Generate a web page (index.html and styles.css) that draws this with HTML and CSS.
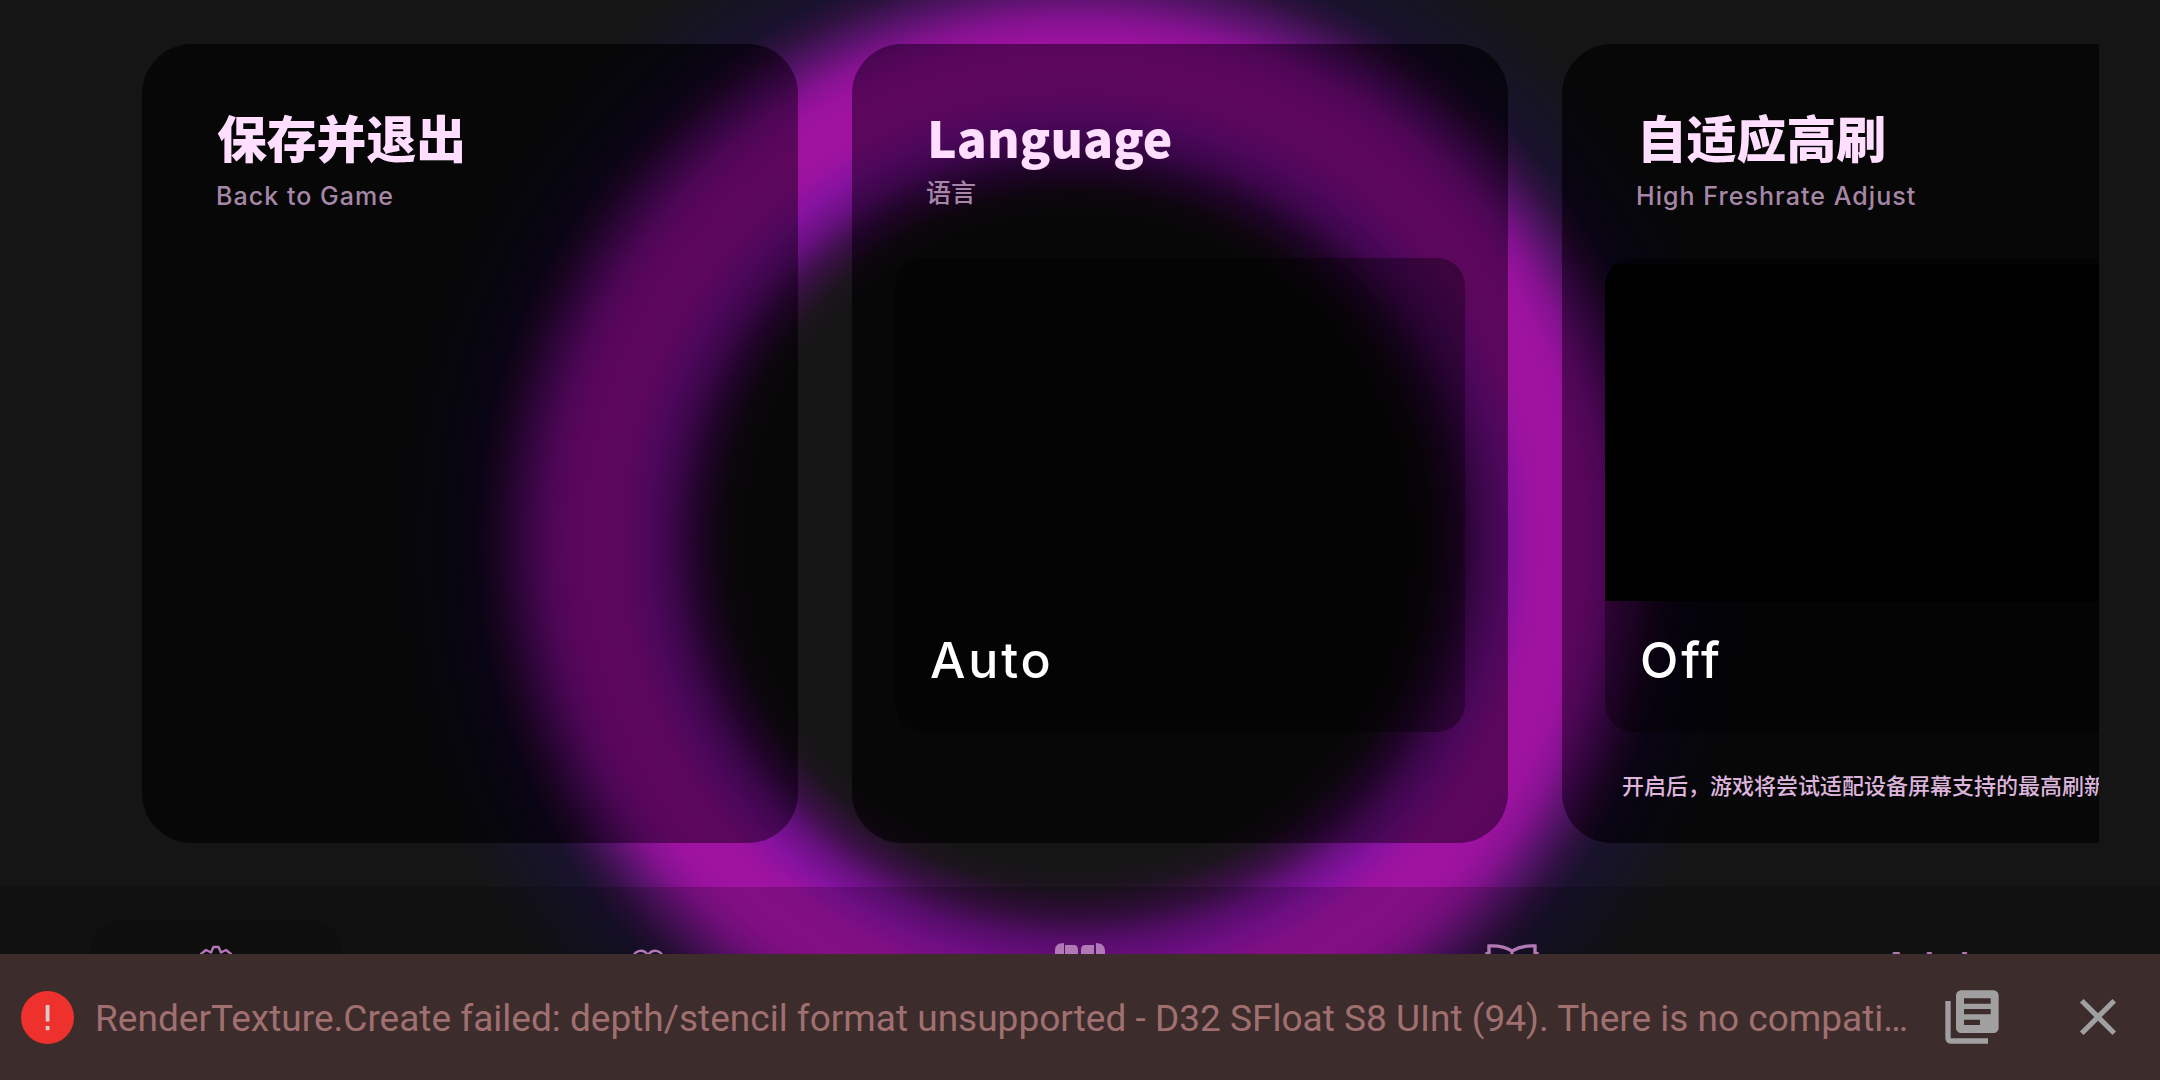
FILE: index.html
```html
<!DOCTYPE html>
<html lang="zh-CN">
<head>
    <meta charset="UTF-8">
    <meta name="viewport" content="width=device-width, initial-scale=1.0">
    <title>Settings</title>
    <link rel="stylesheet" href="styles.css">
</head>
<body>

    <main class="cards">
        <section class="card">
            <h2>保存并退出</h2>
            <p class="subtitle">Back to Game</p>
        </section>

        <section class="card">
            <h2>Language</h2>
            <p class="subtitle cjk">语言</p>
            <div class="option">
                <span class="value">Auto</span>
            </div>
        </section>

        <section class="card">
            <h2>自适应高刷</h2>
            <p class="subtitle">High Freshrate Adjust</p>
            <div class="option">
                <div class="preview"></div>
                <span class="value">Off</span>
            </div>
            <p class="hint">开启后，游戏将尝试适配设备屏幕支持的最高刷新率</p>
        </section>
    </main>

    <!-- Bottom navigation -->
    <nav class="tabs">
        <div class="tab active">
            <svg width="60" height="60" viewBox="0 0 60 60" fill="none" stroke="currentColor" stroke-width="2.4" stroke-linejoin="round">
                <path d="M15 17l5-4 5 2.500 2.500-5.500h5l2.500 5.500 5-2.500 5 4-2 5 4 4v8l-4 3 2 6-5 4-5-2-3 5h-4l-3-5-5 2-5-4 2-6-4-3v-8l4-4z"/>
                <circle cx="30" cy="31" r="7"/>
            </svg>
        </div>
        <div class="tab">
            <svg width="60" height="60" viewBox="0 0 60 60" fill="none" stroke="currentColor" stroke-width="2.4">
                <path d="M30 47C21 38 15 31 15 23c0-10 10-12 15-5 5-7 15-5 15 5 0 8-6 15-15 24z"/>
            </svg>
        </div>
        <div class="tab">
            <svg width="60" height="60" viewBox="0 0 60 60" fill="currentColor">
                <path d="M5 50V13q0-7 9-7v44z"/>
                <path d="M15 50V8h9q4 0 4 5v37z"/>
                <path d="M31 50V13q0-5 4-5h9v42z"/>
                <path d="M46 50V6q8 0 9 7v37z"/>
            </svg>
        </div>
        <div class="tab">
            <svg width="60" height="60" viewBox="0 0 60 60" fill="none" stroke="currentColor" stroke-width="3.4">
                <path d="M30 14Q20 8 7 9V44q13-2 23 5 10-7 23-5V9Q40 8 30 14zV48M5 15v32M55 15v32"/>
            </svg>
        </div>
        <div class="tab">
            <span class="tab-text">Adult</span>
        </div>
    </nav>

    <!-- Error toast -->
    <footer class="toast">
        <span class="badge">
            <svg width="53" height="53" viewBox="0 0 53 53">
                <circle cx="26.5" cy="26.5" r="26.5" fill="#ef312d"/>
                <path d="M24.700 14h3.800v16.500h-3.800zM24.700 35h3.800v4.200h-3.800z" fill="#d6cccc"/>
            </svg>
        </span>
        <p class="message">RenderTexture.Create failed: depth/stencil format unsupported - D32 SFloat S8 UInt (94). There is no compatible format</p>
        <svg class="copy" width="64" height="64" viewBox="0 0 24 24" fill="currentColor">
            <path d="M4 6H2v14c0 1.100.9 2 2 2h14v-2H4z"/>
            <path fill-rule="evenodd" d="M20 2H8c-1.100 0-2 .9-2 2v12c0 1.100.9 2 2 2h12c1.100 0 2-.9 2-2V4c0-1.100-.9-2-2-2zM19 7H9V5h10zM19 11H9V9h10zM15 15H9v-2h6z"/>
        </svg>
        <svg class="close" width="62" height="62" viewBox="0 0 24 24" fill="currentColor">
            <path d="M19 6.410 17.590 5 12 10.590 6.410 5 5 6.410 10.590 12 5 17.590 6.410 19 12 13.410 17.590 19 19 17.590 13.410 12z"/>
        </svg>
    </footer>

</body>
</html>
```
FILE: styles.css
```css
* {
    box-sizing: border-box;
}

body {
    margin: 0;
    width: 2160px;
    height: 1080px;
    overflow: hidden;
    display: flex;
    flex-direction: column;
    font-family: "Noto Sans CJK SC", sans-serif;
    background: #151515 radial-gradient(1000px 985px at 1077px 541px,
        #151515 330px, #1d141f 352px, #3c1048 380px, #681080 405px, #85129f 430px,
        #9c13a0 456px, #a013a0 485px, #9a129e 508px, #84128f 530px, #56136a 556px,
        #2f1140 582px, #19122d 604px, #161424 635px, #151515 690px) fixed;
}

/* Cards */
.cards {
    width: 2099px;
    height: 887px;
    padding: 44px 0 44px 142px;
    display: flex;
    gap: 54px;
    overflow: hidden;
    flex-shrink: 0;
}

.card {
    width: 656px;
    height: 799px;
    flex-shrink: 0;
    padding: 54px 43px 0;
    border-radius: 50px;
    /* same glow as the body, seen through the dark card */
    background: #070707 radial-gradient(1000px 985px at 1077px 541px,
        #070707 330px, #0c060d 352px, #200429 380px, #3b0649 405px, #4d075b 430px,
        #5a075c 456px, #5c075c 485px, #58065b 508px, #4b0653 530px, #30053c 556px,
        #18041f 582px, #090413 604px, #07060e 635px, #070707 690px) fixed;
}

.card h2 {
    margin: 0 0 0 32px;
    height: 79px;
    font-size: 49.8px;
    line-height: 77px;
    font-weight: 900;
    color: #ffdeff;
}

.subtitle {
    margin: 0 0 0 31px;
    height: 36px;
    font-family: Inter, sans-serif;
    font-size: 25px;
    line-height: 38px;
    letter-spacing: 1.05px;
    font-weight: 500;
    color: #a787a8;
}

.subtitle.cjk {
    font-family: "Noto Sans CJK SC", sans-serif;
    letter-spacing: 0;
    line-height: 28px;
}

.option {
    height: 474px;
    margin-top: 45px;
    border-radius: 28px;
    overflow: hidden;
    background: rgba(0, 0, 0, 0.35);
    display: flex;
    flex-direction: column;
    justify-content: flex-end;
}

.preview {
    height: 337px;
    background: #000;
}

.value {
    height: 131px;
    padding-left: 35px;
    font-family: Inter, sans-serif;
    font-size: 50px;
    line-height: 119px;
    letter-spacing: 2.8px;
    font-weight: 500;
    font-variant-ligatures: none;
    color: #fff;
}

.hint {
    margin: 36px 0 0 17px;
    font-size: 22px;
    line-height: 32px;
    font-weight: 500;
    white-space: nowrap;
    color: #dcb4dc;
}

/* Bottom navigation */
.tabs {
    height: 67px;
    flex-shrink: 0;
    display: flex;
    overflow: hidden;
    background: rgba(0, 0, 0, 0.18);
    color: #b078b4;
}

.tab {
    width: 252px;
    height: 130px;
    flex-shrink: 0;
    margin: 33px 90px 0;
    padding-top: 17px;
    border-radius: 30px;
    text-align: center;
}

.tab.active {
    background: rgba(0, 0, 0, 0.12);
}

.tab-text {
    display: block;
    padding: 2px 20px 0 0;
    font-family: Inter, sans-serif;
    font-size: 38px;
    line-height: 54px;
    letter-spacing: 1px;
    font-weight: 600;
}

/* Error toast */
.toast {
    height: 126px;
    padding: 0 31px 0 21px;
    display: flex;
    align-items: center;
    background: #3c2c2c;
    color: #a0a0a0;
}

.badge {
    display: flex;
}

.message {
    width: 1822px;
    margin: 4px 23px 0 21px;
    flex-shrink: 0;
    overflow: hidden;
    white-space: nowrap;
    text-overflow: ellipsis;
    font-family: Roboto, sans-serif;
    font-size: 37.03px;
    line-height: 60px;
    color: #a07070;
}

.copy {
    flex-shrink: 0;
}

.close {
    margin-left: auto;
}
```
